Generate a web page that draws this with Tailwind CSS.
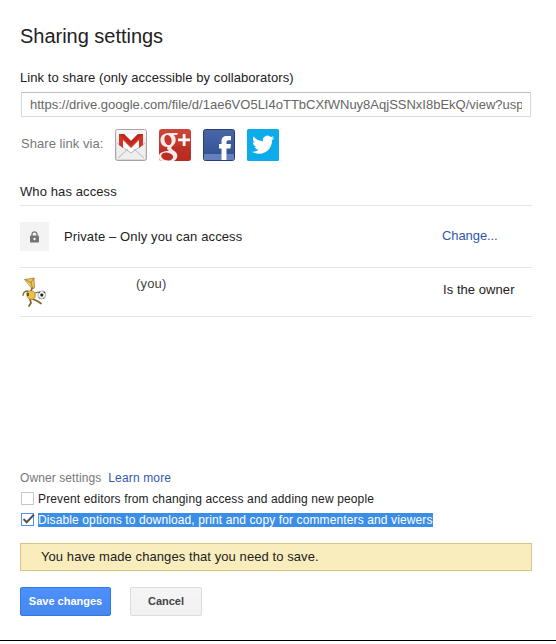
<!DOCTYPE html>
<html lang="en">
<head>
    <meta charset="UTF-8">
    <title>Sharing settings</title>
    <script src="https://cdn.jsdelivr.net/npm/@tailwindcss/browser@4"></script>
</head>
<body class="bg-white font-['Liberation_Sans',Arial,sans-serif] text-[13px] text-[#222] whitespace-nowrap overflow-hidden">

<div class="w-[556px] h-[641px] pl-5 pr-6 border-b border-black flex flex-col">
    <h1 class="mt-[22px] h-7 leading-7 text-[20px] tracking-[-0.02px]">Sharing settings</h1>

    <!-- Link -->
    <label class="mt-[18px] h-5 leading-5 tracking-[0.07px]">Link to share (only accessible by collaborators)</label>
    <div class="mt-1 ml-px h-[25px] w-[510px] border border-[#d9d9d9] border-t-[#c0c0c0] px-2 text-[#666]">
        <div class="overflow-hidden leading-[23px]">https://drive.google.com/file/d/1ae6VO5LI4oTTbCXfWNuy8AqjSSNxI8bEkQ/view?usp</div>
    </div>

    <!-- Share buttons -->
    <div class="mt-3 h-8 flex">
        <span class="ml-px w-[94px] leading-[29px] tracking-[0.05px] text-[#777]">Share link via:</span>
        <div class="flex gap-3">
            <!-- Gmail -->
            <svg class="size-8" viewBox="0 0 32 32">
                <defs>
                    <linearGradient id="env" x1="0" y1="0" x2="0" y2="1"><stop offset="0" stop-color="#f8f8f8"/><stop offset="1" stop-color="#d6d6d6"/></linearGradient>
                    <linearGradient id="red" x1="0" y1="0" x2="0" y2="1"><stop offset="0" stop-color="#d0453b"/><stop offset="1" stop-color="#b8281c"/></linearGradient>
                </defs>
                <rect x=".5" y=".5" width="31" height="31" rx="2" fill="url(#env)" stroke="#a5a5a5"/>
                <path d="M4 5h24v12l-12 8-12-8z" fill="#fff"/>
                <path d="M2 14l14 9 14-9v16H2z" fill="#eee"/>
                <path d="M3 29l10-9M29 29l-10-9M2 14l14 10 14-10" fill="none" stroke="#bbb"/>
                <path d="M4 16V5h5l7 7 7-7h5v11l-4 3v-8l-8 8-8-8v8z" fill="#d23427"/>
                <path d="M4 5h5l7 7 7-7h5l-12 11z" fill="#bd281d"/>
            </svg>
            <!-- Google+ -->
            <svg class="size-8" viewBox="0 0 32 32">
                <rect width="32" height="32" rx="3" fill="url(#red)"/>
                <path d="M0 20q13-3 32-2v11q0 3-3 3H3q-3 0-3-3z" fill="#b52d23" opacity=".5"/>
                <path d="M19 4H10C4.500 4 1.500 7 1.500 11S4 18 8.500 18c-1 2 0 3 1.500 4C4.500 22 0 23.500 0 27v2q0 3 3 3h12c4-2 4.500-7 1-9.500l-3-2.300c-1.500-1.300-.5-2.500.8-3.500 3.700-2.700 3.700-7.700 1-10.700H18z" fill="#f7ebe9"/>
                <ellipse cx="9" cy="11" rx="3.500" ry="5.200" transform="rotate(-15 9 11)" fill="#ca3529"/>
                <ellipse cx="8.200" cy="27.500" rx="6" ry="3.800" transform="rotate(10 8.200 27.500)" fill="#bd2d22"/>
                <path d="M23.700 5h2.800v4.500H31v2.800h-4.500V17h-2.800v-4.700H19V9.500h4.700z" fill="#fff"/>
            </svg>
            <!-- Facebook -->
            <svg class="size-8" viewBox="0 0 32 32">
                <defs><linearGradient id="fb" x1="0" y1="0" x2="0" y2="1"><stop offset="0" stop-color="#4967a8"/><stop offset="1" stop-color="#2f4f91"/></linearGradient></defs>
                <rect x=".5" y=".5" width="31" height="31" rx="2" fill="url(#fb)" stroke="#263f78"/>
                <path d="M1 25h30v6H1z" fill="#6680b9"/>
                <path d="M18.500 31V19.500H16V15h2.500v-2.500C18.500 8.500 20.500 7 24 7h4v4.300h-2.500c-1.700 0-2 .7-2 2.200V15H28l-.6 4.500h-3.900V31z" fill="#fff"/>
            </svg>
            <!-- Twitter -->
            <svg class="size-8" viewBox="0 0 32 32">
                <rect width="32" height="32" rx="1.500" fill="#0cabea"/>
                <path transform="translate(5 4.500) scale(.93)" d="M23.953 4.570a10 10 0 01-2.825.775 4.958 4.958 0 002.163-2.723c-.951.555-2.005.959-3.127 1.184a4.920 4.920 0 00-8.384 4.482C7.690 8.095 4.067 6.130 1.640 3.162a4.822 4.822 0 00-.666 2.475c0 1.710.870 3.213 2.188 4.096a4.904 4.904 0 01-2.228-.616v.060a4.923 4.923 0 003.946 4.827 4.996 4.996 0 01-2.212.085 4.936 4.936 0 004.604 3.417 9.867 9.867 0 01-6.102 2.105c-.390 0-.779-.023-1.170-.067a13.995 13.995 0 007.557 2.209c9.053 0 13.998-7.496 13.998-13.985 0-.210 0-.420-.015-.630A9.935 9.935 0 0024 4.590z" fill="#fff"/>
            </svg>
        </div>
    </div>

    <!-- Access list -->
    <h2 class="mt-[21px] h-6 leading-5 tracking-[0.1px] border-b border-[#e5e5e5]">Who has access</h2>
    <div class="h-[62px] flex items-center border-b border-[#e5e5e5]">
        <div class="size-[29px] bg-[#f3f3f3] flex items-center justify-center">
            <svg class="w-[9px] h-3" viewBox="0 0 9 12">
                <path d="M2 5V3.300a2.500 2.500 0 015 0V5" fill="none" stroke="#737373" stroke-width="1.200"/>
                <rect y="4.500" width="9" height="7" rx=".8" fill="#737373"/>
                <circle cx="4.500" cy="8" r="1.200" fill="#f3f3f3"/>
            </svg>
        </div>
        <span class="ml-[15px] w-[378px] tracking-[0.12px]">Private – Only you can access</span>
        <a class="relative -top-px text-[#3058ad] tracking-[-0.08px]">Change...</a>
    </div>
    <div class="h-[49px] flex border-b border-[#e5e5e5]">
        <svg class="mt-[9px] ml-[2px] w-[26px] h-[30px]" viewBox="0 0 26 30">
            <g stroke="#86652a" stroke-width=".6" stroke-linejoin="round" stroke-linecap="round">
                <path d="M3 2.500l9-1.500.5 10-2 .8z" fill="#f0c64f"/>
                <path d="M3 2.500l6 3 3-4.500M9 5.500l1.500 6" fill="none"/>
                <path d="M10 11l-1 3" stroke-width="1.600"/>
                <path d="M6 14q-5 0-5 4.500M13 16l3-1" fill="none" stroke-width="1.300"/>
                <path d="M11 22l5 2.500 3 2M8 22l1 4-2 3" fill="none" stroke-width="1.700"/>
                <path d="M5 16c1-3 7-3.500 8 .5s-1 6-4 6-5-3-4-6.500z" fill="#edc043"/>
            </g>
            <path d="M6 16v3" stroke="#3d3427" stroke-width="1.500"/>
            <circle cx="19.800" cy="18" r="4" fill="#f1f1f1" stroke="#888" stroke-width=".6"/>
            <path d="M19.800 16.300l1.700 1.200-.7 2h-2l-.7-2zM16 16.500l1.200-2 1.200.8zM23.600 16.500l-1.200-2-1.200.8zM16.500 20.500l1.500.2.500 1.300zM23 20.500l-1.500.2-.5 1.300z" fill="#222"/>
        </svg>
        <span class="ml-[88px] w-[307px] mt-[6px] leading-5 tracking-[0.15px] text-[#444]">(you)</span>
        <span class="mt-3 leading-5 tracking-[0.06px]">Is the owner</span>
    </div>

    <!-- Owner settings -->
    <div class="mt-[151px] h-5 leading-5 text-[12px] tracking-[0.09px] text-[#777] flex gap-[7px]">
        <span>Owner settings</span>
        <a class="text-[#3058ad] tracking-[0.15px]">Learn more</a>
    </div>
    <div class="h-[21px] flex items-center text-[12px]">
        <span class="ml-px mr-1 size-[13px] border border-[#c6c6c6]"></span>
        <span class="tracking-[0.135px]">Prevent editors from changing access and adding new people</span>
    </div>
    <div class="h-[21px] flex items-center text-[12px]">
        <span class="relative ml-px mr-1 size-[13px] border border-[#4d90fe]">
            <svg class="absolute -top-px left-0 w-[13px] h-3" viewBox="0 0 13 12"><path d="M1.500 6l3.200 3.200L12 1.500" fill="none" stroke="#555" stroke-width="2"/></svg>
        </span>
        <span class="h-[14px] leading-[14px] bg-[#3b8ee8] text-white tracking-[0.12px]">Disable options to download, print and copy for commenters and viewers</span>
    </div>

    <!-- Unsaved changes -->
    <div class="mt-[13px] h-7 pl-5 leading-[26px] border border-[#dcc383] bg-[#f9edbe] tracking-[0.08px]">You have made changes that you need to save.</div>

    <div class="mt-4 flex gap-[19px] text-[11px] font-bold">
        <button class="w-[91px] h-[29px] rounded-[2px] border border-[#3079ed] bg-linear-to-b from-[#4d90fe] to-[#4787ed] text-white">Save changes</button>
        <button class="w-[72px] h-[29px] rounded-[2px] border border-[#dcdcdc] bg-linear-to-b from-[#f5f5f5] to-[#f1f1f1] text-[#444]">Cancel</button>
    </div>
</div>
</body>
</html>
